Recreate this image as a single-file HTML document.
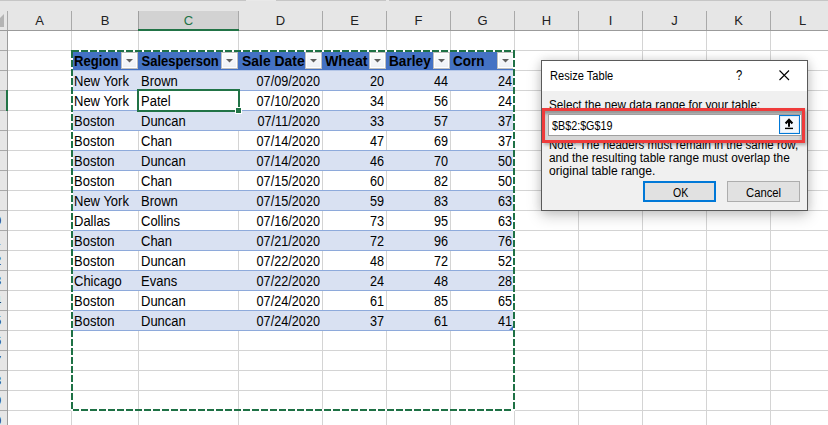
<!DOCTYPE html>
<html><head><meta charset="utf-8"><style>
html,body{margin:0;padding:0;}
body{width:828px;height:425px;overflow:hidden;position:relative;background:#fff;font-family:"Liberation Sans", sans-serif;}
div,span{position:absolute;box-sizing:content-box;}
span{line-height:15px;white-space:nowrap;}
</style></head><body>
<div style="left:0px;top:0px;width:828px;height:1px;background:#c6c6c6"></div>
<div style="left:246px;top:0px;width:30px;height:1px;background:#e9e9e9"></div>
<div style="left:386px;top:0px;width:3px;height:1px;background:#e9e9e9"></div>
<div style="left:0px;top:1px;width:828px;height:29px;background:#e6e6e6"></div>
<div style="left:0px;top:30px;width:828px;height:1px;background:#9b9b9b"></div>
<svg style="position:absolute;left:0;top:0" width="8" height="30"><polygon points="4,14 4,27 -9,27" fill="#b4b4b4"/></svg>
<div style="left:7px;top:11px;width:1px;height:19px;background:#a9a9a9"></div>
<div style="left:71px;top:11px;width:1px;height:19px;background:#a9a9a9"></div>
<div style="left:138px;top:11px;width:1px;height:19px;background:#a9a9a9"></div>
<div style="left:238px;top:11px;width:1px;height:19px;background:#a9a9a9"></div>
<div style="left:322px;top:11px;width:1px;height:19px;background:#a9a9a9"></div>
<div style="left:386px;top:11px;width:1px;height:19px;background:#a9a9a9"></div>
<div style="left:450px;top:11px;width:1px;height:19px;background:#a9a9a9"></div>
<div style="left:514px;top:11px;width:1px;height:19px;background:#a9a9a9"></div>
<div style="left:578px;top:11px;width:1px;height:19px;background:#a9a9a9"></div>
<div style="left:642px;top:11px;width:1px;height:19px;background:#a9a9a9"></div>
<div style="left:706px;top:11px;width:1px;height:19px;background:#a9a9a9"></div>
<div style="left:770px;top:11px;width:1px;height:19px;background:#a9a9a9"></div>
<div style="left:834px;top:11px;width:1px;height:19px;background:#a9a9a9"></div>
<div style="left:139px;top:11px;width:99px;height:18px;background:#d2d2d2"></div>
<div style="left:138px;top:29px;width:101px;height:2px;background:#217346"></div>
<div style="left:138px;top:11px;width:1px;height:18px;background:#9f9f9f"></div>
<span style="left:8px;top:13px;width:63px;text-align:center;font-size:13px;color:#222">A</span>
<span style="left:72px;top:13px;width:66px;text-align:center;font-size:13px;color:#222">B</span>
<span style="left:139px;top:13px;width:99px;text-align:center;font-size:13px;color:#217346">C</span>
<span style="left:239px;top:13px;width:83px;text-align:center;font-size:13px;color:#222">D</span>
<span style="left:323px;top:13px;width:63px;text-align:center;font-size:13px;color:#222">E</span>
<span style="left:387px;top:13px;width:63px;text-align:center;font-size:13px;color:#222">F</span>
<span style="left:451px;top:13px;width:63px;text-align:center;font-size:13px;color:#222">G</span>
<span style="left:515px;top:13px;width:63px;text-align:center;font-size:13px;color:#222">H</span>
<span style="left:579px;top:13px;width:63px;text-align:center;font-size:13px;color:#222">I</span>
<span style="left:643px;top:13px;width:63px;text-align:center;font-size:13px;color:#222">J</span>
<span style="left:707px;top:13px;width:63px;text-align:center;font-size:13px;color:#222">K</span>
<span style="left:771px;top:13px;width:63px;text-align:center;font-size:13px;color:#222">L</span>
<div style="left:0px;top:31px;width:7px;height:394px;background:#e6e6e6"></div>
<div style="left:7px;top:31px;width:1px;height:394px;background:#9b9b9b"></div>
<div style="left:0px;top:50px;width:7px;height:1px;background:#a9a9a9"></div>
<div style="left:0px;top:70px;width:7px;height:1px;background:#a9a9a9"></div>
<div style="left:0px;top:90px;width:7px;height:1px;background:#a9a9a9"></div>
<div style="left:0px;top:110px;width:7px;height:1px;background:#a9a9a9"></div>
<div style="left:0px;top:130px;width:7px;height:1px;background:#a9a9a9"></div>
<div style="left:0px;top:150px;width:7px;height:1px;background:#a9a9a9"></div>
<div style="left:0px;top:170px;width:7px;height:1px;background:#a9a9a9"></div>
<div style="left:0px;top:190px;width:7px;height:1px;background:#a9a9a9"></div>
<div style="left:0px;top:210px;width:7px;height:1px;background:#a9a9a9"></div>
<div style="left:0px;top:230px;width:7px;height:1px;background:#a9a9a9"></div>
<div style="left:0px;top:250px;width:7px;height:1px;background:#a9a9a9"></div>
<div style="left:0px;top:270px;width:7px;height:1px;background:#a9a9a9"></div>
<div style="left:0px;top:290px;width:7px;height:1px;background:#a9a9a9"></div>
<div style="left:0px;top:310px;width:7px;height:1px;background:#a9a9a9"></div>
<div style="left:0px;top:330px;width:7px;height:1px;background:#a9a9a9"></div>
<div style="left:0px;top:350px;width:7px;height:1px;background:#a9a9a9"></div>
<div style="left:0px;top:370px;width:7px;height:1px;background:#a9a9a9"></div>
<div style="left:0px;top:390px;width:7px;height:1px;background:#a9a9a9"></div>
<div style="left:0px;top:410px;width:7px;height:1px;background:#a9a9a9"></div>
<div style="left:0px;top:430px;width:7px;height:1px;background:#a9a9a9"></div>
<div style="left:0px;top:91px;width:6px;height:19px;background:#d2d2d2"></div>
<div style="left:6px;top:90px;width:2px;height:21px;background:#217346"></div>
<div style="left:0;top:31px;width:7px;height:394px;overflow:hidden">
<span style="left:-18.5px;top:2px;width:25px;text-align:center;font-size:13px;color:#222">1</span>
<span style="left:-18.5px;top:22px;width:25px;text-align:center;font-size:13px;color:#222">2</span>
<span style="left:-18.5px;top:42px;width:25px;text-align:center;font-size:13px;color:#222">3</span>
<span style="left:-18.5px;top:62px;width:25px;text-align:center;font-size:13px;color:#222">4</span>
<span style="left:-18.5px;top:82px;width:25px;text-align:center;font-size:13px;color:#222">5</span>
<span style="left:-18.5px;top:102px;width:25px;text-align:center;font-size:13px;color:#222">6</span>
<span style="left:-18.5px;top:122px;width:25px;text-align:center;font-size:13px;color:#222">7</span>
<span style="left:-18.5px;top:142px;width:25px;text-align:center;font-size:13px;color:#222">8</span>
<span style="left:-18.5px;top:162px;width:25px;text-align:center;font-size:13px;color:#222">9</span>
<span style="left:-18.5px;top:182px;width:25px;text-align:center;font-size:13px;color:#222">10</span>
<span style="left:-18.5px;top:202px;width:25px;text-align:center;font-size:13px;color:#222">11</span>
<span style="left:-18.5px;top:222px;width:25px;text-align:center;font-size:13px;color:#222">12</span>
<span style="left:-18.5px;top:242px;width:25px;text-align:center;font-size:13px;color:#222">13</span>
<span style="left:-18.5px;top:262px;width:25px;text-align:center;font-size:13px;color:#222">14</span>
<span style="left:-18.5px;top:282px;width:25px;text-align:center;font-size:13px;color:#222">15</span>
<span style="left:-18.5px;top:302px;width:25px;text-align:center;font-size:13px;color:#222">16</span>
<span style="left:-18.5px;top:322px;width:25px;text-align:center;font-size:13px;color:#222">17</span>
<span style="left:-18.5px;top:342px;width:25px;text-align:center;font-size:13px;color:#222">18</span>
<span style="left:-18.5px;top:362px;width:25px;text-align:center;font-size:13px;color:#222">19</span>
<span style="left:-18.5px;top:382px;width:25px;text-align:center;font-size:13px;color:#222">20</span>
</div>
<div style="left:8px;top:50px;width:820px;height:1px;background:#d4d4d4"></div>
<div style="left:8px;top:70px;width:820px;height:1px;background:#d4d4d4"></div>
<div style="left:8px;top:90px;width:820px;height:1px;background:#d4d4d4"></div>
<div style="left:8px;top:110px;width:820px;height:1px;background:#d4d4d4"></div>
<div style="left:8px;top:130px;width:820px;height:1px;background:#d4d4d4"></div>
<div style="left:8px;top:150px;width:820px;height:1px;background:#d4d4d4"></div>
<div style="left:8px;top:170px;width:820px;height:1px;background:#d4d4d4"></div>
<div style="left:8px;top:190px;width:820px;height:1px;background:#d4d4d4"></div>
<div style="left:8px;top:210px;width:820px;height:1px;background:#d4d4d4"></div>
<div style="left:8px;top:230px;width:820px;height:1px;background:#d4d4d4"></div>
<div style="left:8px;top:250px;width:820px;height:1px;background:#d4d4d4"></div>
<div style="left:8px;top:270px;width:820px;height:1px;background:#d4d4d4"></div>
<div style="left:8px;top:290px;width:820px;height:1px;background:#d4d4d4"></div>
<div style="left:8px;top:310px;width:820px;height:1px;background:#d4d4d4"></div>
<div style="left:8px;top:330px;width:820px;height:1px;background:#d4d4d4"></div>
<div style="left:8px;top:350px;width:820px;height:1px;background:#d4d4d4"></div>
<div style="left:8px;top:370px;width:820px;height:1px;background:#d4d4d4"></div>
<div style="left:8px;top:390px;width:820px;height:1px;background:#d4d4d4"></div>
<div style="left:8px;top:410px;width:820px;height:1px;background:#d4d4d4"></div>
<div style="left:8px;top:430px;width:820px;height:1px;background:#d4d4d4"></div>
<div style="left:71px;top:31px;width:1px;height:394px;background:#d4d4d4"></div>
<div style="left:138px;top:31px;width:1px;height:394px;background:#d4d4d4"></div>
<div style="left:238px;top:31px;width:1px;height:394px;background:#d4d4d4"></div>
<div style="left:322px;top:31px;width:1px;height:394px;background:#d4d4d4"></div>
<div style="left:386px;top:31px;width:1px;height:394px;background:#d4d4d4"></div>
<div style="left:450px;top:31px;width:1px;height:394px;background:#d4d4d4"></div>
<div style="left:514px;top:31px;width:1px;height:394px;background:#d4d4d4"></div>
<div style="left:578px;top:31px;width:1px;height:394px;background:#d4d4d4"></div>
<div style="left:642px;top:31px;width:1px;height:394px;background:#d4d4d4"></div>
<div style="left:706px;top:31px;width:1px;height:394px;background:#d4d4d4"></div>
<div style="left:770px;top:31px;width:1px;height:394px;background:#d4d4d4"></div>
<div style="left:834px;top:31px;width:1px;height:394px;background:#d4d4d4"></div>
<div style="left:72px;top:51px;width:442px;height:19px;background:#4472c4"></div>
<div style="left:72px;top:70px;width:442px;height:1px;background:#b4c6e7"></div>
<div style="left:72px;top:71px;width:442px;height:19px;background:#d9e1f2"></div>
<div style="left:72px;top:90px;width:442px;height:1px;background:#8eaadb"></div>
<div style="left:72px;top:110px;width:442px;height:1px;background:#8eaadb"></div>
<div style="left:72px;top:111px;width:442px;height:19px;background:#d9e1f2"></div>
<div style="left:72px;top:130px;width:442px;height:1px;background:#8eaadb"></div>
<div style="left:72px;top:150px;width:442px;height:1px;background:#8eaadb"></div>
<div style="left:72px;top:151px;width:442px;height:19px;background:#d9e1f2"></div>
<div style="left:72px;top:170px;width:442px;height:1px;background:#8eaadb"></div>
<div style="left:72px;top:190px;width:442px;height:1px;background:#8eaadb"></div>
<div style="left:72px;top:191px;width:442px;height:19px;background:#d9e1f2"></div>
<div style="left:72px;top:210px;width:442px;height:1px;background:#8eaadb"></div>
<div style="left:72px;top:230px;width:442px;height:1px;background:#8eaadb"></div>
<div style="left:72px;top:231px;width:442px;height:19px;background:#d9e1f2"></div>
<div style="left:72px;top:250px;width:442px;height:1px;background:#8eaadb"></div>
<div style="left:72px;top:270px;width:442px;height:1px;background:#8eaadb"></div>
<div style="left:72px;top:271px;width:442px;height:19px;background:#d9e1f2"></div>
<div style="left:72px;top:290px;width:442px;height:1px;background:#8eaadb"></div>
<div style="left:72px;top:310px;width:442px;height:1px;background:#8eaadb"></div>
<div style="left:72px;top:311px;width:442px;height:19px;background:#d9e1f2"></div>
<div style="left:72px;top:330px;width:442px;height:1px;background:#8eaadb"></div>
<span style="left:74px;top:54px;font-weight:bold;font-size:13px;color:#000;white-space:nowrap;transform:scale(1.01,1.1);transform-origin:0 12px">Region</span>
<div style="left:121px;top:52px;width:15px;height:15px;border:1px solid #bfbfbf;background:linear-gradient(#fbfbfc,#eef1f6);box-shadow:inset 0 0 0 1px #fff"></div>
<svg style="position:absolute;left:125px;top:59px" width="9" height="5"><polygon points="1,0 8,0 4.5,3.6" fill="#5f5f5f"/></svg>
<span style="left:141.5px;top:54px;font-weight:bold;font-size:13px;color:#000;white-space:nowrap;transform:scale(1.0,1.1);transform-origin:0 12px">Salesperson</span>
<div style="left:221px;top:52px;width:15px;height:15px;border:1px solid #bfbfbf;background:linear-gradient(#fbfbfc,#eef1f6);box-shadow:inset 0 0 0 1px #fff"></div>
<svg style="position:absolute;left:225px;top:59px" width="9" height="5"><polygon points="1,0 8,0 4.5,3.6" fill="#5f5f5f"/></svg>
<span style="left:241.5px;top:54px;font-weight:bold;font-size:13px;color:#000;white-space:nowrap;transform:scale(1.07,1.1);transform-origin:0 12px">Sale Date</span>
<div style="left:305px;top:52px;width:15px;height:15px;border:1px solid #bfbfbf;background:linear-gradient(#fbfbfc,#eef1f6);box-shadow:inset 0 0 0 1px #fff"></div>
<svg style="position:absolute;left:309px;top:59px" width="9" height="5"><polygon points="1,0 8,0 4.5,3.6" fill="#5f5f5f"/></svg>
<span style="left:325px;top:54px;font-weight:bold;font-size:13px;color:#000;white-space:nowrap;transform:scale(1.09,1.1);transform-origin:0 12px">Wheat</span>
<div style="left:369px;top:52px;width:15px;height:15px;border:1px solid #bfbfbf;background:linear-gradient(#fbfbfc,#eef1f6);box-shadow:inset 0 0 0 1px #fff"></div>
<svg style="position:absolute;left:373px;top:59px" width="9" height="5"><polygon points="1,0 8,0 4.5,3.6" fill="#5f5f5f"/></svg>
<span style="left:388.5px;top:54px;font-weight:bold;font-size:13px;color:#000;white-space:nowrap;transform:scale(1.05,1.1);transform-origin:0 12px">Barley</span>
<div style="left:433px;top:52px;width:15px;height:15px;border:1px solid #bfbfbf;background:linear-gradient(#fbfbfc,#eef1f6);box-shadow:inset 0 0 0 1px #fff"></div>
<svg style="position:absolute;left:437px;top:59px" width="9" height="5"><polygon points="1,0 8,0 4.5,3.6" fill="#5f5f5f"/></svg>
<span style="left:452.5px;top:54px;font-weight:bold;font-size:13px;color:#000;white-space:nowrap;transform:scale(1.035,1.1);transform-origin:0 12px">Corn</span>
<div style="left:497px;top:52px;width:15px;height:15px;border:1px solid #bfbfbf;background:linear-gradient(#fbfbfc,#eef1f6);box-shadow:inset 0 0 0 1px #fff"></div>
<svg style="position:absolute;left:501px;top:59px" width="9" height="5"><polygon points="1,0 8,0 4.5,3.6" fill="#5f5f5f"/></svg>
<span style="left:74px;top:74px;font-size:13px;color:#000;white-space:nowrap;transform:scaleY(1.1);transform-origin:0 12px">New York</span>
<span style="left:141px;top:74px;font-size:13px;color:#000;white-space:nowrap;transform:scaleY(1.1);transform-origin:0 12px">Brown</span>
<span style="left:238px;top:74px;width:82px;text-align:right;font-size:13px;color:#000;transform:scale(0.975,1.1);transform-origin:100% 12px">07/09/2020</span>
<span style="left:322px;top:74px;width:62px;text-align:right;font-size:13px;color:#000;transform:scale(0.975,1.1);transform-origin:100% 12px">20</span>
<span style="left:386px;top:74px;width:62px;text-align:right;font-size:13px;color:#000;transform:scale(0.975,1.1);transform-origin:100% 12px">44</span>
<span style="left:450px;top:74px;width:62px;text-align:right;font-size:13px;color:#000;transform:scale(0.975,1.1);transform-origin:100% 12px">24</span>
<span style="left:74px;top:94px;font-size:13px;color:#000;white-space:nowrap;transform:scaleY(1.1);transform-origin:0 12px">New York</span>
<span style="left:141px;top:94px;font-size:13px;color:#000;white-space:nowrap;transform:scaleY(1.1);transform-origin:0 12px">Patel</span>
<span style="left:238px;top:94px;width:82px;text-align:right;font-size:13px;color:#000;transform:scale(0.975,1.1);transform-origin:100% 12px">07/10/2020</span>
<span style="left:322px;top:94px;width:62px;text-align:right;font-size:13px;color:#000;transform:scale(0.975,1.1);transform-origin:100% 12px">34</span>
<span style="left:386px;top:94px;width:62px;text-align:right;font-size:13px;color:#000;transform:scale(0.975,1.1);transform-origin:100% 12px">56</span>
<span style="left:450px;top:94px;width:62px;text-align:right;font-size:13px;color:#000;transform:scale(0.975,1.1);transform-origin:100% 12px">24</span>
<span style="left:74px;top:114px;font-size:13px;color:#000;white-space:nowrap;transform:scaleY(1.1);transform-origin:0 12px">Boston</span>
<span style="left:141px;top:114px;font-size:13px;color:#000;white-space:nowrap;transform:scaleY(1.1);transform-origin:0 12px">Duncan</span>
<span style="left:238px;top:114px;width:82px;text-align:right;font-size:13px;color:#000;transform:scale(0.975,1.1);transform-origin:100% 12px">07/11/2020</span>
<span style="left:322px;top:114px;width:62px;text-align:right;font-size:13px;color:#000;transform:scale(0.975,1.1);transform-origin:100% 12px">33</span>
<span style="left:386px;top:114px;width:62px;text-align:right;font-size:13px;color:#000;transform:scale(0.975,1.1);transform-origin:100% 12px">57</span>
<span style="left:450px;top:114px;width:62px;text-align:right;font-size:13px;color:#000;transform:scale(0.975,1.1);transform-origin:100% 12px">37</span>
<span style="left:74px;top:134px;font-size:13px;color:#000;white-space:nowrap;transform:scaleY(1.1);transform-origin:0 12px">Boston</span>
<span style="left:141px;top:134px;font-size:13px;color:#000;white-space:nowrap;transform:scaleY(1.1);transform-origin:0 12px">Chan</span>
<span style="left:238px;top:134px;width:82px;text-align:right;font-size:13px;color:#000;transform:scale(0.975,1.1);transform-origin:100% 12px">07/14/2020</span>
<span style="left:322px;top:134px;width:62px;text-align:right;font-size:13px;color:#000;transform:scale(0.975,1.1);transform-origin:100% 12px">47</span>
<span style="left:386px;top:134px;width:62px;text-align:right;font-size:13px;color:#000;transform:scale(0.975,1.1);transform-origin:100% 12px">69</span>
<span style="left:450px;top:134px;width:62px;text-align:right;font-size:13px;color:#000;transform:scale(0.975,1.1);transform-origin:100% 12px">37</span>
<span style="left:74px;top:154px;font-size:13px;color:#000;white-space:nowrap;transform:scaleY(1.1);transform-origin:0 12px">Boston</span>
<span style="left:141px;top:154px;font-size:13px;color:#000;white-space:nowrap;transform:scaleY(1.1);transform-origin:0 12px">Duncan</span>
<span style="left:238px;top:154px;width:82px;text-align:right;font-size:13px;color:#000;transform:scale(0.975,1.1);transform-origin:100% 12px">07/14/2020</span>
<span style="left:322px;top:154px;width:62px;text-align:right;font-size:13px;color:#000;transform:scale(0.975,1.1);transform-origin:100% 12px">46</span>
<span style="left:386px;top:154px;width:62px;text-align:right;font-size:13px;color:#000;transform:scale(0.975,1.1);transform-origin:100% 12px">70</span>
<span style="left:450px;top:154px;width:62px;text-align:right;font-size:13px;color:#000;transform:scale(0.975,1.1);transform-origin:100% 12px">50</span>
<span style="left:74px;top:174px;font-size:13px;color:#000;white-space:nowrap;transform:scaleY(1.1);transform-origin:0 12px">Boston</span>
<span style="left:141px;top:174px;font-size:13px;color:#000;white-space:nowrap;transform:scaleY(1.1);transform-origin:0 12px">Chan</span>
<span style="left:238px;top:174px;width:82px;text-align:right;font-size:13px;color:#000;transform:scale(0.975,1.1);transform-origin:100% 12px">07/15/2020</span>
<span style="left:322px;top:174px;width:62px;text-align:right;font-size:13px;color:#000;transform:scale(0.975,1.1);transform-origin:100% 12px">60</span>
<span style="left:386px;top:174px;width:62px;text-align:right;font-size:13px;color:#000;transform:scale(0.975,1.1);transform-origin:100% 12px">82</span>
<span style="left:450px;top:174px;width:62px;text-align:right;font-size:13px;color:#000;transform:scale(0.975,1.1);transform-origin:100% 12px">50</span>
<span style="left:74px;top:194px;font-size:13px;color:#000;white-space:nowrap;transform:scaleY(1.1);transform-origin:0 12px">New York</span>
<span style="left:141px;top:194px;font-size:13px;color:#000;white-space:nowrap;transform:scaleY(1.1);transform-origin:0 12px">Brown</span>
<span style="left:238px;top:194px;width:82px;text-align:right;font-size:13px;color:#000;transform:scale(0.975,1.1);transform-origin:100% 12px">07/15/2020</span>
<span style="left:322px;top:194px;width:62px;text-align:right;font-size:13px;color:#000;transform:scale(0.975,1.1);transform-origin:100% 12px">59</span>
<span style="left:386px;top:194px;width:62px;text-align:right;font-size:13px;color:#000;transform:scale(0.975,1.1);transform-origin:100% 12px">83</span>
<span style="left:450px;top:194px;width:62px;text-align:right;font-size:13px;color:#000;transform:scale(0.975,1.1);transform-origin:100% 12px">63</span>
<span style="left:74px;top:214px;font-size:13px;color:#000;white-space:nowrap;transform:scaleY(1.1);transform-origin:0 12px">Dallas</span>
<span style="left:141px;top:214px;font-size:13px;color:#000;white-space:nowrap;transform:scaleY(1.1);transform-origin:0 12px">Collins</span>
<span style="left:238px;top:214px;width:82px;text-align:right;font-size:13px;color:#000;transform:scale(0.975,1.1);transform-origin:100% 12px">07/16/2020</span>
<span style="left:322px;top:214px;width:62px;text-align:right;font-size:13px;color:#000;transform:scale(0.975,1.1);transform-origin:100% 12px">73</span>
<span style="left:386px;top:214px;width:62px;text-align:right;font-size:13px;color:#000;transform:scale(0.975,1.1);transform-origin:100% 12px">95</span>
<span style="left:450px;top:214px;width:62px;text-align:right;font-size:13px;color:#000;transform:scale(0.975,1.1);transform-origin:100% 12px">63</span>
<span style="left:74px;top:234px;font-size:13px;color:#000;white-space:nowrap;transform:scaleY(1.1);transform-origin:0 12px">Boston</span>
<span style="left:141px;top:234px;font-size:13px;color:#000;white-space:nowrap;transform:scaleY(1.1);transform-origin:0 12px">Chan</span>
<span style="left:238px;top:234px;width:82px;text-align:right;font-size:13px;color:#000;transform:scale(0.975,1.1);transform-origin:100% 12px">07/21/2020</span>
<span style="left:322px;top:234px;width:62px;text-align:right;font-size:13px;color:#000;transform:scale(0.975,1.1);transform-origin:100% 12px">72</span>
<span style="left:386px;top:234px;width:62px;text-align:right;font-size:13px;color:#000;transform:scale(0.975,1.1);transform-origin:100% 12px">96</span>
<span style="left:450px;top:234px;width:62px;text-align:right;font-size:13px;color:#000;transform:scale(0.975,1.1);transform-origin:100% 12px">76</span>
<span style="left:74px;top:254px;font-size:13px;color:#000;white-space:nowrap;transform:scaleY(1.1);transform-origin:0 12px">Boston</span>
<span style="left:141px;top:254px;font-size:13px;color:#000;white-space:nowrap;transform:scaleY(1.1);transform-origin:0 12px">Duncan</span>
<span style="left:238px;top:254px;width:82px;text-align:right;font-size:13px;color:#000;transform:scale(0.975,1.1);transform-origin:100% 12px">07/22/2020</span>
<span style="left:322px;top:254px;width:62px;text-align:right;font-size:13px;color:#000;transform:scale(0.975,1.1);transform-origin:100% 12px">48</span>
<span style="left:386px;top:254px;width:62px;text-align:right;font-size:13px;color:#000;transform:scale(0.975,1.1);transform-origin:100% 12px">72</span>
<span style="left:450px;top:254px;width:62px;text-align:right;font-size:13px;color:#000;transform:scale(0.975,1.1);transform-origin:100% 12px">52</span>
<span style="left:74px;top:274px;font-size:13px;color:#000;white-space:nowrap;transform:scaleY(1.1);transform-origin:0 12px">Chicago</span>
<span style="left:141px;top:274px;font-size:13px;color:#000;white-space:nowrap;transform:scaleY(1.1);transform-origin:0 12px">Evans</span>
<span style="left:238px;top:274px;width:82px;text-align:right;font-size:13px;color:#000;transform:scale(0.975,1.1);transform-origin:100% 12px">07/22/2020</span>
<span style="left:322px;top:274px;width:62px;text-align:right;font-size:13px;color:#000;transform:scale(0.975,1.1);transform-origin:100% 12px">24</span>
<span style="left:386px;top:274px;width:62px;text-align:right;font-size:13px;color:#000;transform:scale(0.975,1.1);transform-origin:100% 12px">48</span>
<span style="left:450px;top:274px;width:62px;text-align:right;font-size:13px;color:#000;transform:scale(0.975,1.1);transform-origin:100% 12px">28</span>
<span style="left:74px;top:294px;font-size:13px;color:#000;white-space:nowrap;transform:scaleY(1.1);transform-origin:0 12px">Boston</span>
<span style="left:141px;top:294px;font-size:13px;color:#000;white-space:nowrap;transform:scaleY(1.1);transform-origin:0 12px">Duncan</span>
<span style="left:238px;top:294px;width:82px;text-align:right;font-size:13px;color:#000;transform:scale(0.975,1.1);transform-origin:100% 12px">07/24/2020</span>
<span style="left:322px;top:294px;width:62px;text-align:right;font-size:13px;color:#000;transform:scale(0.975,1.1);transform-origin:100% 12px">61</span>
<span style="left:386px;top:294px;width:62px;text-align:right;font-size:13px;color:#000;transform:scale(0.975,1.1);transform-origin:100% 12px">85</span>
<span style="left:450px;top:294px;width:62px;text-align:right;font-size:13px;color:#000;transform:scale(0.975,1.1);transform-origin:100% 12px">65</span>
<span style="left:74px;top:314px;font-size:13px;color:#000;white-space:nowrap;transform:scaleY(1.1);transform-origin:0 12px">Boston</span>
<span style="left:141px;top:314px;font-size:13px;color:#000;white-space:nowrap;transform:scaleY(1.1);transform-origin:0 12px">Duncan</span>
<span style="left:238px;top:314px;width:82px;text-align:right;font-size:13px;color:#000;transform:scale(0.975,1.1);transform-origin:100% 12px">07/24/2020</span>
<span style="left:322px;top:314px;width:62px;text-align:right;font-size:13px;color:#000;transform:scale(0.975,1.1);transform-origin:100% 12px">37</span>
<span style="left:386px;top:314px;width:62px;text-align:right;font-size:13px;color:#000;transform:scale(0.975,1.1);transform-origin:100% 12px">61</span>
<span style="left:450px;top:314px;width:62px;text-align:right;font-size:13px;color:#000;transform:scale(0.975,1.1);transform-origin:100% 12px">41</span>
<svg style="position:absolute;left:509px;top:326px" width="4" height="4"><polygon points="4,0 4,4 0,4" fill="#4472c4"/></svg>
<div style="left:137px;top:89px;width:103px;height:2px;background:#217346"></div>
<div style="left:137px;top:110px;width:103px;height:2px;background:#217346"></div>
<div style="left:137px;top:89px;width:2px;height:23px;background:#217346"></div>
<div style="left:238px;top:89px;width:2px;height:21px;background:#217346"></div>
<div style="left:236px;top:108px;width:5px;height:5px;background:#217346;outline:1px solid #fff"></div>
<div style="left:71px;top:50px;width:444px;height:2px;background:repeating-linear-gradient(90deg,#1e7145 0 7px,#fff 7px 9px);background-position:1px 0"></div>
<div style="left:71px;top:409px;width:444px;height:2px;background:repeating-linear-gradient(90deg,#1e7145 0 7px,#fff 7px 9px);background-position:1px 0"></div>
<div style="left:71px;top:50px;width:2px;height:361px;background:repeating-linear-gradient(180deg,#1e7145 0 7px,#fff 7px 9px);background-position:0 1px"></div>
<div style="left:513px;top:50px;width:2px;height:361px;background:repeating-linear-gradient(180deg,#1e7145 0 7px,#fff 7px 9px);background-position:0 1px"></div>
<div style="left:541px;top:60px;width:267px;height:151px;box-shadow:0 0 9px rgba(0,0,0,0.12), 0 5px 14px rgba(0,0,0,0.2);background:#f0f0f0"></div>
<div style="left:541px;top:60px;width:265px;height:149px;border:1px solid #5a5a5a;background:#f0f0f0"></div>
<div style="left:542px;top:61px;width:265px;height:30px;background:#fff"></div>
<span style="left:550px;top:69px;font-size:12px;color:#000;transform:scaleX(0.924);transform-origin:0 0;">Resize Table</span>
<span style="left:736px;top:68px;font-size:14px;color:#000;transform:scaleX(0.8);transform-origin:0 0;">?</span>
<svg style="position:absolute;left:779px;top:70px" width="11" height="11"><path d="M0.5 0.5L10 10M10 0.5L0.5 10" stroke="#000" stroke-width="1.1"/></svg>
<span style="left:549px;top:98px;font-size:12px;color:#000;transform:scaleX(0.977);transform-origin:0 0;">Select the new data range for your table:</span>
<span style="left:549px;top:138px;font-size:12px;color:#000;transform:scaleX(0.961);transform-origin:0 0;">Note: The headers must remain in the same row,</span>
<span style="left:549px;top:151px;font-size:12px;color:#000;transform:scaleX(0.986);transform-origin:0 0;">and the resulting table range must overlap the</span>
<span style="left:549px;top:164px;font-size:12px;color:#000;transform:scaleX(1.01);transform-origin:0 0;">original table range.</span>
<div style="left:542px;top:108px;width:257px;height:29px;border:3px solid #ef3b3b;background:#d6d6d6;box-shadow:2px 2px 3px rgba(0,0,0,.28), inset -1px 3px 3px rgba(0,0,0,.3)"></div>
<div style="left:548px;top:114px;width:252px;height:20px;background:#fff;border:1px solid #a0a0a0"></div>
<span style="left:552px;top:119px;font-size:12px;color:#000;transform:scaleX(0.897);transform-origin:0 0;">$B$2:$G$19</span>
<div style="left:779px;top:115px;width:19px;height:17px;border:1px solid #0078d7;background:#f3f8fd;box-shadow:inset 0 0 0 1px #dfeaf6"></div>
<svg style="position:absolute;left:784px;top:118px" width="10" height="12"><path d="M1.6 5.4L5 1.8L8.4 5.4" stroke="#000" stroke-width="2.2" fill="none"/><path d="M5 2.5V8.8" stroke="#000" stroke-width="2"/><rect x="1" y="9.7" width="8" height="1.4" fill="#000"/></svg>
<div style="left:643px;top:181px;width:69px;height:17px;border:2px solid #0078d7;background:#e1e1e1"></div>
<span style="left:673px;top:186px;font-size:12px;color:#000;transform:scaleX(0.88);transform-origin:0 0;">OK</span>
<div style="left:727px;top:181px;width:71px;height:19px;border:1px solid #adadad;background:#e1e1e1"></div>
<span style="left:746px;top:186px;font-size:12px;color:#000;transform:scaleX(0.94);transform-origin:0 0;">Cancel</span>
</body></html>
